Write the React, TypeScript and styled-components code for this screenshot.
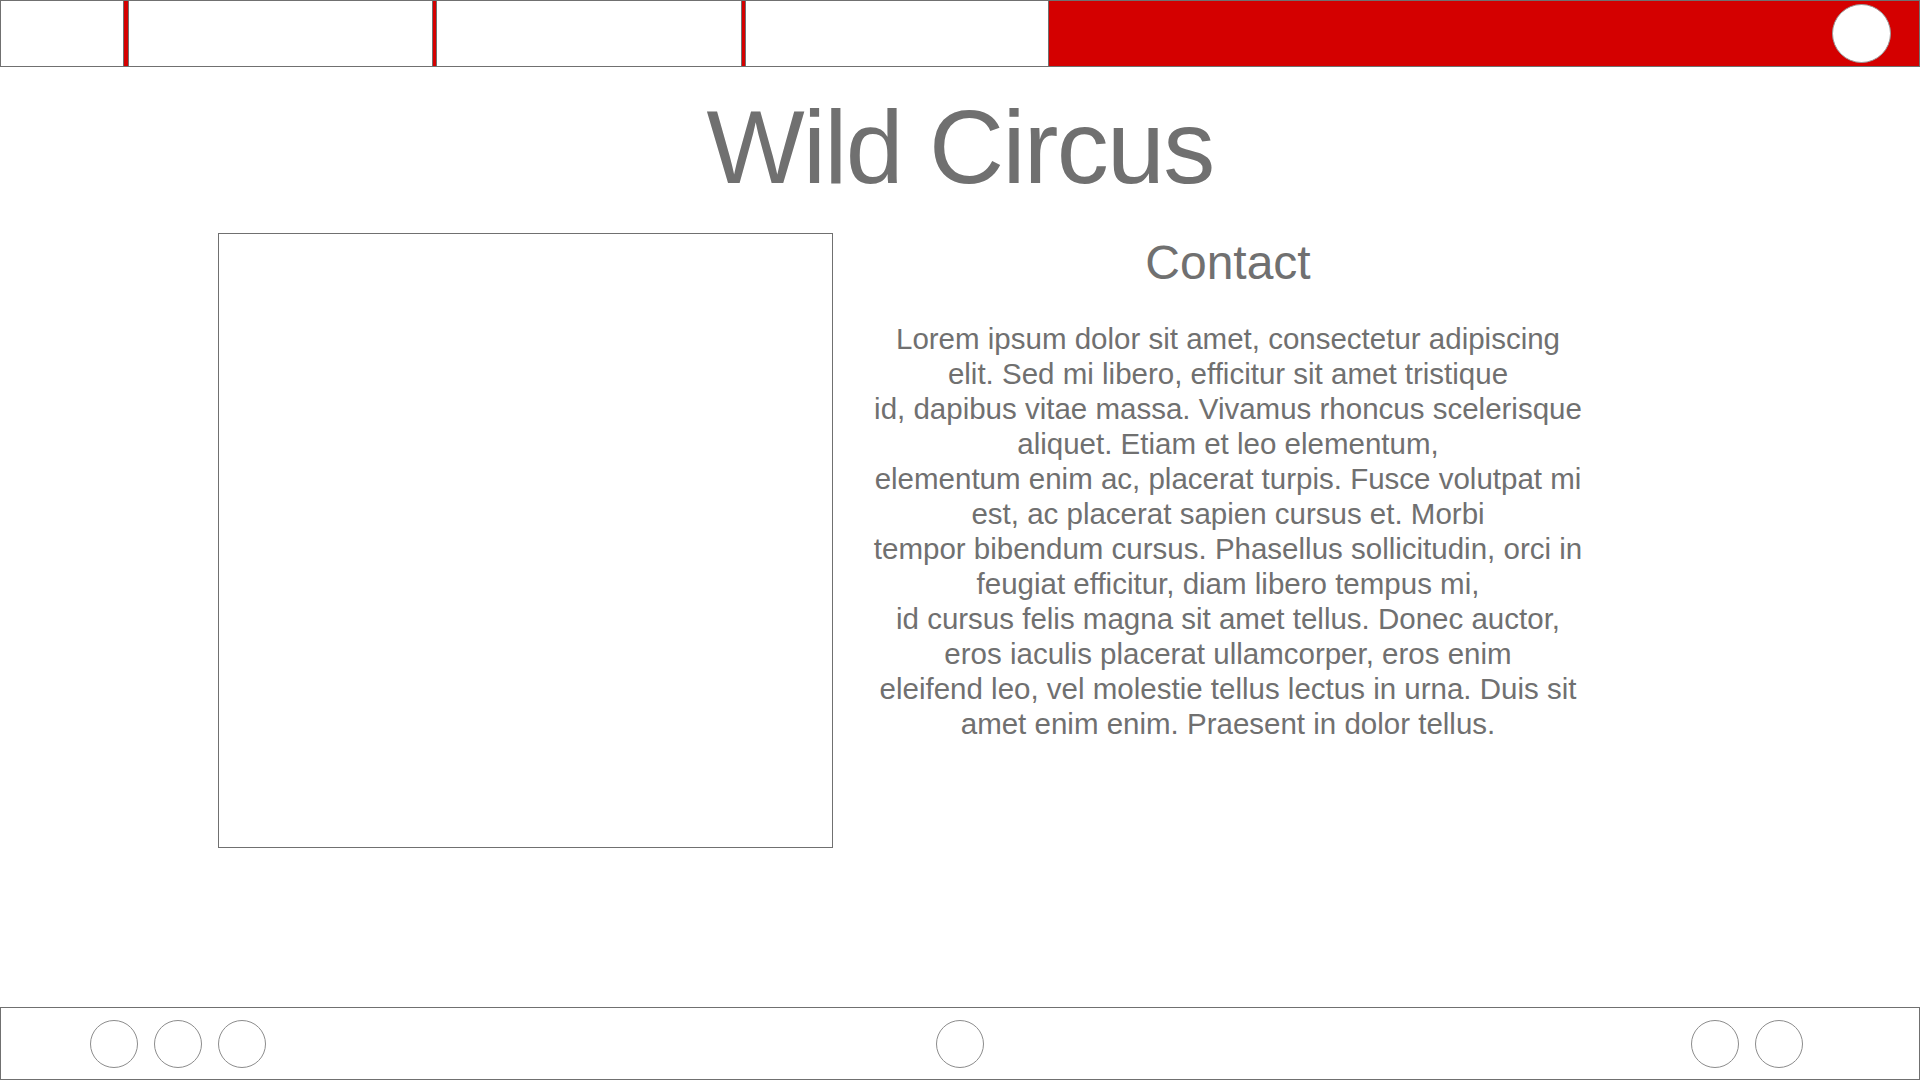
import React from "react";
import styled, { createGlobalStyle } from "styled-components";

const GRAY = "#707070";
const RED = "#d40000";

const GlobalStyle = createGlobalStyle`
  html, body {
    margin: 0;
    padding: 0;
    background: #ffffff;
  }
  body {
    font-family: "Liberation Sans", Arial, Helvetica, sans-serif;
    color: ${GRAY};
  }
  * { box-sizing: border-box; }
`;

const Page = styled.div`
  display: flex;
  flex-direction: column;
  width: 1920px;
  height: 1080px;
  overflow: hidden;
`;

const Header = styled.header`
  display: flex;
  align-items: stretch;
  height: 67px;
  flex-shrink: 0;
  background: ${RED};
  border: 1px solid ${GRAY};
`;

const NavItem = styled.a<{ $w: number; $gap: number; $first?: boolean }>`
  display: block;
  width: ${(p) => p.$w}px;
  margin-left: ${(p) => p.$gap}px;
  background: #ffffff;
  border-left: ${(p) => (p.$first ? "none" : `1px solid ${GRAY}`)};
  border-right: 1px solid ${GRAY};
`;

const HeaderSpacer = styled.div`
  flex: 1;
`;

const Avatar = styled.div`
  align-self: center;
  width: 59px;
  height: 59px;
  margin-right: 28px;
  border-radius: 50%;
  background: #ffffff;
  border: 1px solid #9a9a9a;
`;

const Main = styled.main`
  flex: 1;
  display: flex;
  flex-direction: column;
`;

const Title = styled.h1`
  margin: 28px 0 0;
  font-size: 104px;
  line-height: 104px;
  font-weight: 400;
  letter-spacing: -1.7px;
  text-align: center;
  color: ${GRAY};
`;

const ContentRow = styled.section`
  display: flex;
  align-items: flex-start;
  margin: 34px 0 0 218px;
`;

const ImageFrame = styled.div`
  width: 615px;
  height: 615px;
  border: 1px solid ${GRAY};
  background: #ffffff;
  flex-shrink: 0;
`;

const TextColumn = styled.div`
  width: 790px;
  display: flex;
  flex-direction: column;
  align-items: center;
  padding-top: 6px;
`;

const Subtitle = styled.h2`
  margin: 0;
  font-size: 48px;
  line-height: 48px;
  font-weight: 400;
  color: ${GRAY};
`;

const Body = styled.p`
  margin: 34px 0 0;
  font-size: 29.5px;
  line-height: 35px;
  text-align: center;
  white-space: nowrap;
  color: ${GRAY};
`;

const Footer = styled.footer`
  display: grid;
  grid-template-columns: 1fr auto 1fr;
  align-items: center;
  height: 73px;
  flex-shrink: 0;
  border: 1px solid ${GRAY};
`;

const IconGroup = styled.div<{ $side: "left" | "center" | "right" }>`
  display: flex;
  gap: 16px;
  justify-self: ${(p) =>
    p.$side === "left" ? "start" : p.$side === "right" ? "end" : "center"};
  padding-left: ${(p) => (p.$side === "left" ? "89px" : "0")};
  padding-right: ${(p) => (p.$side === "right" ? "116px" : "0")};
`;

const SocialIcon = styled.a`
  display: block;
  width: 48px;
  height: 48px;
  border-radius: 50%;
  border: 1px solid #8c8c8c;
  background: #ffffff;
`;

const lines = [
  "Lorem ipsum dolor sit amet, consectetur adipiscing",
  "elit. Sed mi libero, efficitur sit amet tristique",
  "id, dapibus vitae massa. Vivamus rhoncus scelerisque",
  "aliquet. Etiam et leo elementum,",
  "elementum enim ac, placerat turpis. Fusce volutpat mi",
  "est, ac placerat sapien cursus et. Morbi",
  "tempor bibendum cursus. Phasellus sollicitudin, orci in",
  "feugiat efficitur, diam libero tempus mi,",
  "id cursus felis magna sit amet tellus. Donec auctor,",
  "eros iaculis placerat ullamcorper, eros enim",
  "eleifend leo, vel molestie tellus lectus in urna. Duis sit",
  "amet enim enim. Praesent in dolor tellus.",
];

export default function App() {
  return (
    <>
      <GlobalStyle />
      <Page>
        <Header>
          <NavItem $w={123} $gap={0} $first />
          <NavItem $w={305} $gap={4} />
          <NavItem $w={306} $gap={3} />
          <NavItem $w={304} $gap={3} />
          <HeaderSpacer />
          <Avatar />
        </Header>
        <Main>
          <Title>Wild Circus</Title>
          <ContentRow>
            <ImageFrame />
            <TextColumn>
              <Subtitle>Contact</Subtitle>
              <Body>
                {lines.map((l, i) => (
                  <React.Fragment key={i}>
                    {l}
                    {i < lines.length - 1 && <br />}
                  </React.Fragment>
                ))}
              </Body>
            </TextColumn>
          </ContentRow>
        </Main>
        <Footer>
          <IconGroup $side="left">
            <SocialIcon />
            <SocialIcon />
            <SocialIcon />
          </IconGroup>
          <IconGroup $side="center">
            <SocialIcon />
          </IconGroup>
          <IconGroup $side="right">
            <SocialIcon />
            <SocialIcon />
          </IconGroup>
        </Footer>
      </Page>
    </>
  );
}
